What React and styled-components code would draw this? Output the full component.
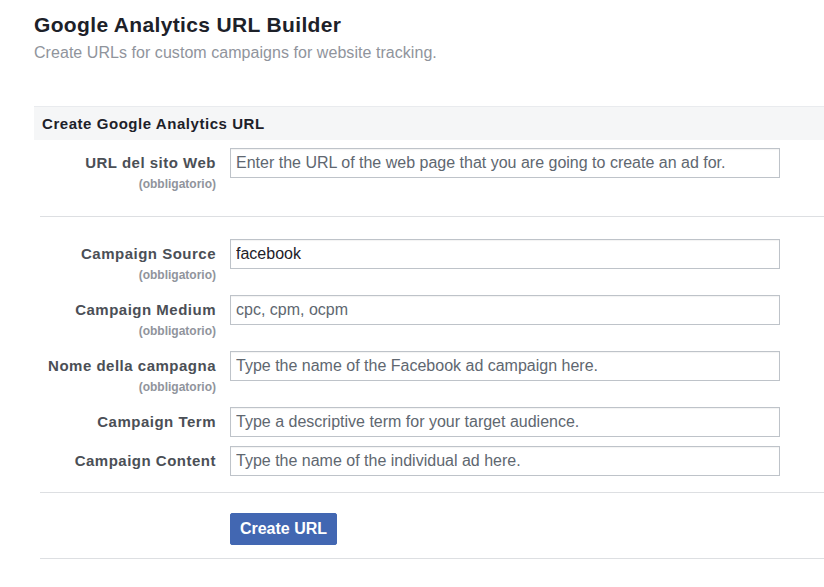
import styled, { createGlobalStyle } from "styled-components";

const GlobalStyle = createGlobalStyle`
    body {
        margin: 0;
        background: #ffffff;
        font-family: "Liberation Sans", Arial, sans-serif;
    }
`;

const campi = [
    { label: "Campaign Source", required: true, value: "facebook" },
    { label: "Campaign Medium", required: true, placeholder: "cpc, cpm, ocpm" },
    { label: "Nome della campagna", required: true, placeholder: "Type the name of the Facebook ad campaign here." },
    { label: "Campaign Term", placeholder: "Type a descriptive term for your target audience." },
    { label: "Campaign Content", placeholder: "Type the name of the individual ad here." },
];

function Campo({ label, required, value, placeholder }) {
    return (
        <Riga required={required}>
            <Etichetta>
                <NomeCampo>{label}</NomeCampo>
                {required && <Obbligatorio>(obbligatorio)</Obbligatorio>}
            </Etichetta>
            <Input defaultValue={value} placeholder={placeholder} />
        </Riga>
    );
}

export default function App() {
    return (
        <Pagina>
            <GlobalStyle />
            <Titolo>Google Analytics URL Builder</Titolo>
            <Sottotitolo>Create URLs for custom campaigns for website tracking.</Sottotitolo>

            <Sezione>
                <TestataSezione>Create Google Analytics URL</TestataSezione>

                <Gruppo first>
                    <Campo
                        label="URL del sito Web"
                        required
                        placeholder="Enter the URL of the web page that you are going to create an ad for." />
                </Gruppo>

                <Gruppo>
                    {campi.map((c) => (
                        <Campo key={c.label} {...c} />
                    ))}
                </Gruppo>

                <Azioni>
                    <Bottone>Create URL</Bottone>
                </Azioni>
            </Sezione>
        </Pagina>
    );
}

const Pagina = styled.div`
    padding: 13px 0 0 34px;
`;

const Titolo = styled.h1`
    margin: 0;
    font-size: 21px;
    font-weight: 700;
    letter-spacing: 0.35px;
    line-height: 24px;
    color: #1d2129;
`;

const Sottotitolo = styled.p`
    margin: 7px 0 0;
    font-size: 16px;
    line-height: 18px;
    letter-spacing: 0.05px;
    color: #90949c;
`;

const Sezione = styled.section`
    margin-top: 44px;
`;

const TestataSezione = styled.h2`
    margin: 0;
    height: 33px;
    padding-left: 8px;
    display: flex;
    align-items: center;
    background: #f5f6f7;
    border-top: 1px solid #e9ebee;
    font-size: 15px;
    font-weight: 700;
    letter-spacing: 0.55px;
    color: #1d2129;
`;

const Gruppo = styled.div`
    margin-left: 6px;
    padding: ${p => p.first ? "8px 0 21px" : "22px 0 16px"};
    display: flex;
    flex-direction: column;
    gap: 9px;
    border-bottom: 1px solid #dddfe2;
`;

const Riga = styled.div`
    display: grid;
    grid-template-columns: 176px 550px;
    column-gap: 14px;
    align-items: start;
    padding-bottom: ${p => p.required ? "5px" : "0"};
`;

const Etichetta = styled.div`
    display: flex;
    flex-direction: column;
    align-items: flex-end;
    text-align: right;
`;

const NomeCampo = styled.span`
    font-size: 15px;
    font-weight: 700;
    letter-spacing: 0.5px;
    line-height: 30px;
    color: #4b4f56;
`;

const Obbligatorio = styled.span`
    font-size: 12px;
    font-weight: 700;
    line-height: 12px;
    color: #90949c;
`;

const Input = styled.input`
    box-sizing: border-box;
    width: 550px;
    height: 30px;
    margin: 0;
    padding: 0 5px;
    border: 1px solid #bec3c9;
    border-radius: 0;
    box-shadow: inset 0 1px 1px rgba(0, 0, 0, 0.05);
    font-family: "Liberation Sans", Arial, sans-serif;
    font-size: 16px;
    color: #1d2129;
    outline: none;

    &::placeholder {
        color: #606770;
        opacity: 1;
    }
`;

const Azioni = styled.div`
    margin-left: 6px;
    padding: 20px 0 13px 190px;
    border-bottom: 1px solid #dddfe2;
    box-shadow: 0 1px 0 #f2f3f5;
`;

const Bottone = styled.button`
    height: 32px;
    width: 107px;
    padding: 0;
    background: #4267b2;
    border: 1px solid #4267b2;
    border-radius: 2px;
    color: #ffffff;
    font-family: "Liberation Sans", Arial, sans-serif;
    font-size: 16px;
    font-weight: 700;
    cursor: pointer;
`;
